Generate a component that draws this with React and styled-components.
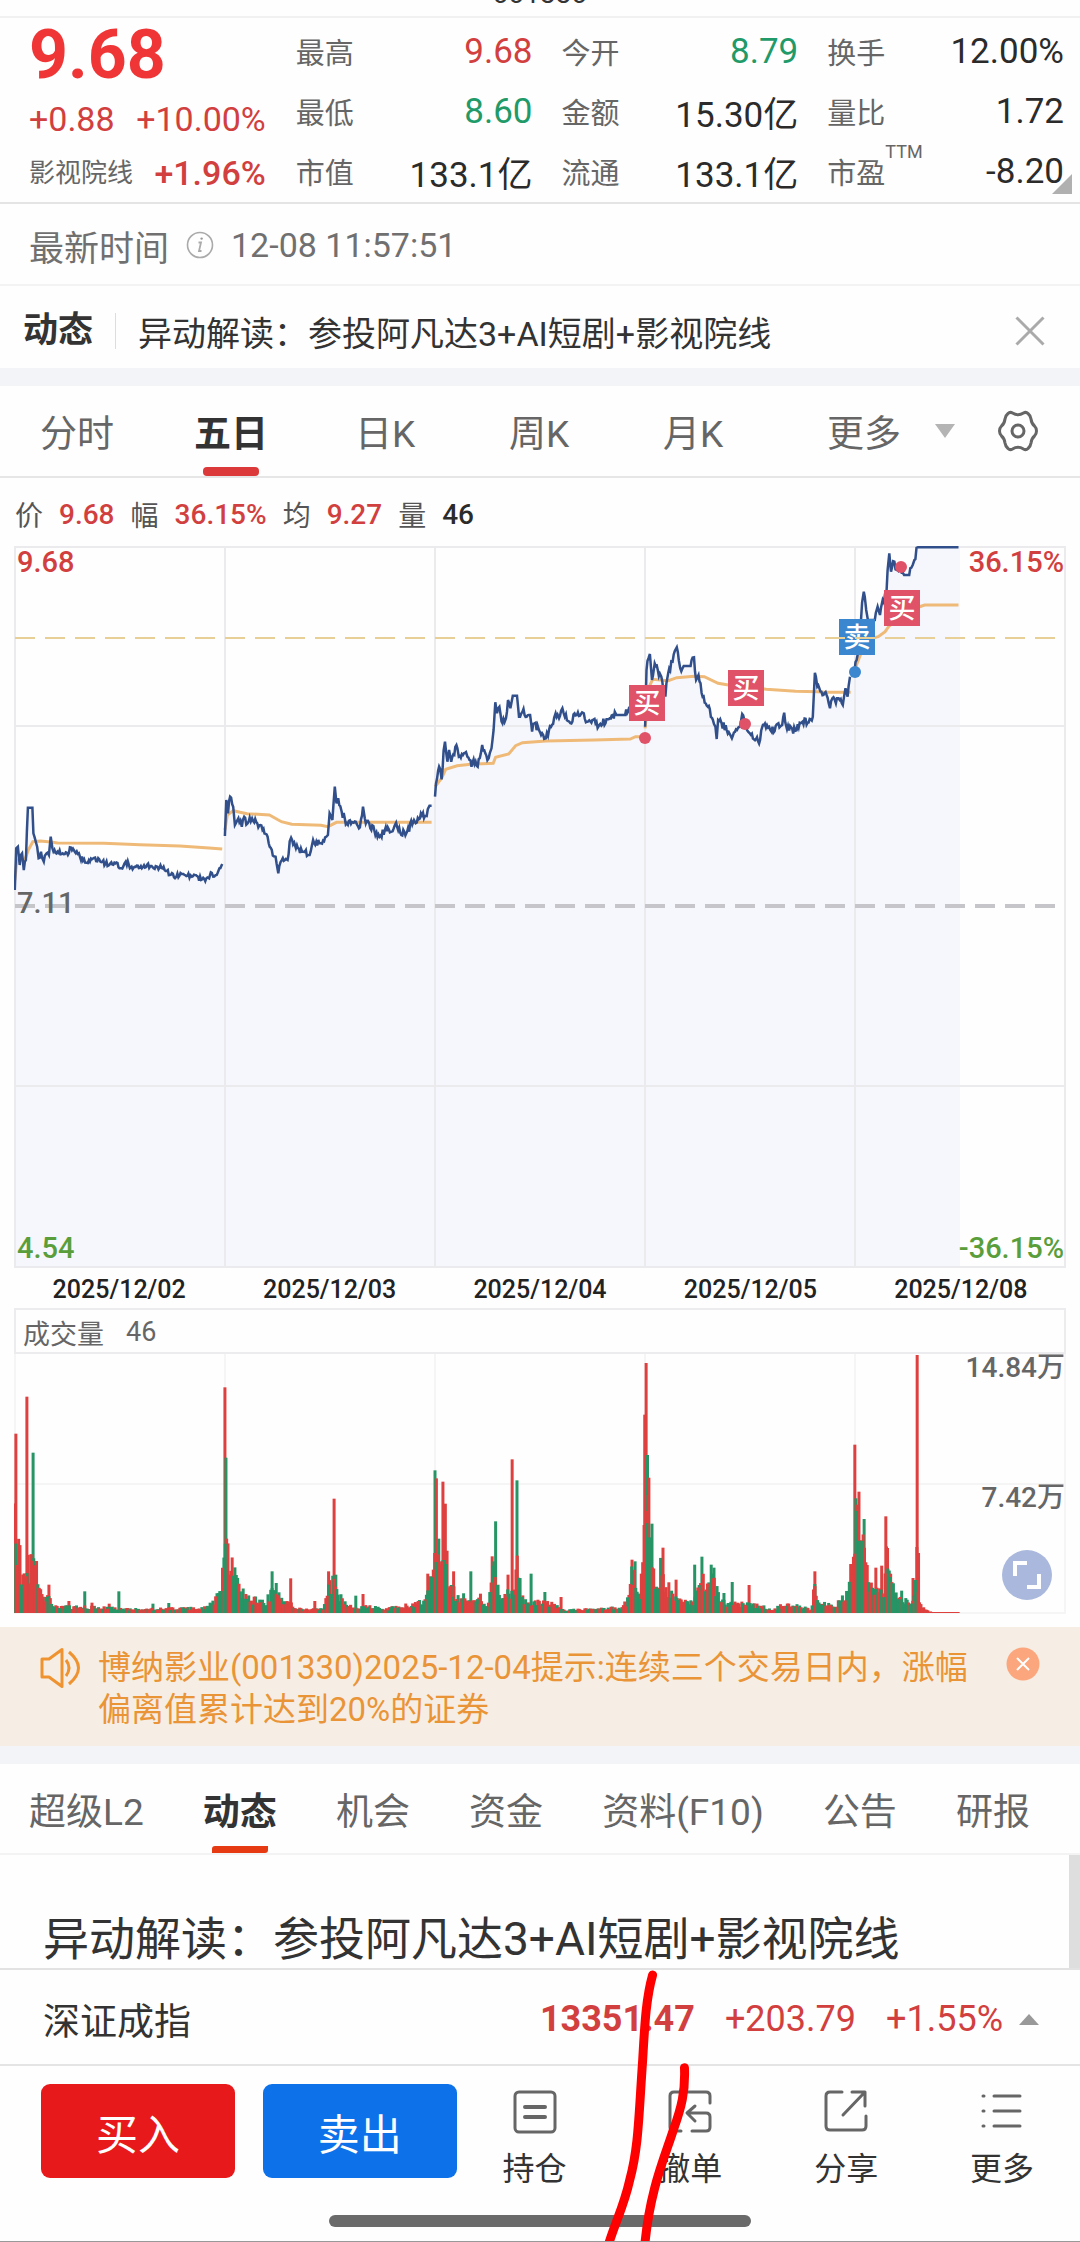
import React, { useState } from "react";
import styled, { createGlobalStyle } from "styled-components";

const GlobalStyle = createGlobalStyle`
  * {
    box-sizing: border-box;
  }
  body {
    margin: 0;
    background: #fefefe;
    color: #333;
    font-family: Roboto, "Noto Sans CJK SC", sans-serif;
  }
  button {
    border: 0;
    padding: 0;
    background: none;
    color: inherit;
    font: inherit;
    cursor: pointer;
  }
  h2, p, dl, dd, dt {
    margin: 0;
    font-weight: 400;
  }
  svg {
    display: block;
  }
`;

const RED = "#d23f3f";
const GREEN = "#1f9a68";
const tones = { up: RED, down: GREEN, plain: "#2b2b2b", muted: "#666" };

/* ---------- data ---------- */

const stats = [
  { label: "最高", value: "9.68", tone: "up" },
  { label: "今开", value: "8.79", tone: "down" },
  { label: "换手", value: "12.00%", tone: "plain" },
  { label: "最低", value: "8.60", tone: "down" },
  { label: "金额", value: "15.30亿", tone: "plain" },
  { label: "量比", value: "1.72", tone: "plain" },
  { label: "市值", value: "133.1亿", tone: "plain" },
  { label: "流通", value: "133.1亿", tone: "plain" },
  { label: "市盈", value: "-8.20", tone: "plain", note: "TTM" }
];

const periods = ["分时", "五日", "日K", "周K", "月K"];
const sections = ["超级L2", "动态", "机会", "资金", "资料(F10)", "公告", "研报"];
const dates = ["2025/12/02", "2025/12/03", "2025/12/04", "2025/12/05", "2025/12/08"];

// Series are kept in ticks: x grows to the right, y grows downwards.
const prices = [
  "46,1050 50,925 55,920 60,975 67,940 72,990 78,960 84,803 97,803 100,880 108,910 115,955 122,935 130,965 138,940 145,945 150,890 155,925 170,935 185,940 200,945 206,922 220,935 235,950 255,968 270,958 300,965 320,975 335,968 355,985 368,965 385,980 440,978 460,980 490,990 496,1005 515,1010 535,1002 560,1010 590,1018 610,1015 615,997 622,1010 632,1005 640,985 648,972",
  "656,888 660,780 665,820 671,770 680,800 685,855 695,835 705,860 712,830 722,850 735,835 750,850 765,870 780,890 792,930 803,950 811,1000 818,965 838,960 848,893 862,925 885,935 902,945 912,900 935,910 955,885 960,820 968,840 975,740 980,790 985,775 995,815 1010,850 1030,848 1048,862 1057,800 1062,835 1075,850 1090,872 1105,890 1120,872 1140,875 1153,848 1165,878 1185,875 1205,840 1210,850 1225,820 1242,828 1250,797 1256,797",
  "1266,770 1272,715 1278,680 1285,718 1295,605 1302,665 1307,630 1313,665 1328,615 1335,650 1350,640 1360,650 1372,680 1378,658 1390,680 1403,615 1412,640 1422,655 1430,625 1436,570 1441,487 1446,520 1453,500 1462,550 1472,535 1478,480 1485,505 1492,467 1504,467 1510,530 1520,515 1542,525 1548,575 1555,550 1568,570 1588,595 1603,560 1616,520 1626,535 1636,505 1643,530 1656,545 1678,525 1698,520 1708,545 1723,540 1743,555 1773,535 1793,525 1818,525 1830,500",
  "1876,560 1880,390 1890,342 1896,420 1904,370 1913,390 1923,410 1935,470 1943,400 1956,365 1968,322 1978,385 1988,378 2008,378 2018,352 2024,420 2031,405 2043,470 2058,500 2073,540 2080,560 2084,597 2088,540 2098,550 2113,570 2128,595 2143,570 2151,560 2158,522 2166,550 2180,580 2198,597 2210,600 2218,555 2243,575 2263,550 2274,555 2280,518 2288,568 2313,572 2333,545 2348,548 2363,530 2369,398 2376,440 2388,455 2403,465 2413,505 2420,475 2430,490 2438,475 2450,495 2458,445 2464,470 2471,410",
  "2484,395 2493,345 2503,240 2511,155 2518,210 2523,240 2543,240 2551,200 2558,225 2566,180 2576,175 2580,90 2585,40 2590,95 2600,65 2608,90 2618,80 2628,105 2643,105 2653,75 2658,60 2668,22 2786,22"
];

const averages = [
  "46,1020 52,960 75,960 85,930 98,905 120,903 150,906 170,909 305,910 410,914 525,918 610,924 648,927",
  "656,870 663,825 680,812 700,817 720,821 785,825 820,845 850,853 935,856 955,860 980,847 1256,847",
  "1266,740 1285,715 1297,688 1330,677 1370,673 1435,670 1442,652 1480,642 1500,617 1520,608 1588,603 1728,600 1833,597 1848,590 1871,590",
  "1876,565 1888,440 1898,418 1943,422 1968,413 2018,409 2048,410 2088,430 2118,435 2228,448 2313,454 2376,455 2398,457 2473,457",
  "2486,385 2503,340 2513,300 2553,290 2573,275 2583,260 2628,215 2673,200 2688,195 2786,195"
];

const marks = [
  { text: "买", color: "#e05268", x: 633, y: 157, dotX: 631, dotY: 192 },
  { text: "买", color: "#e05268", x: 732, y: 142, dotX: 731, dotY: 178 },
  { text: "买", color: "#e05268", x: 888, y: 62, dotX: 887, dotY: 21 },
  { text: "卖", color: "#3b87cf", x: 843, y: 91, dotX: 841, dotY: 126 }
];

// Outline of the traded volume, tick:height
const volumeBase =
  "42:340 48:290 55:270 65:130 100:180 113:140 125:70 150:50 165:28 200:22 320:20 360:14 440:14 600:20 625:40 645:75 653:300 665:260 675:170 690:120 710:75 735:50 770:35 800:80 825:40 860:25 880:12 940:14 955:90 975:110 985:80 1000:40 1030:20 1080:24 1120:12 1150:22 1230:40 1245:90 1262:140 1275:280 1298:240 1305:110 1330:60 1400:42 1420:20 1435:160 1445:85 1465:60 1490:90 1505:160 1520:50 1535:30 1568:45 1588:34 1628:26 1648:10 1718:16 1808:20 1826:45 1836:150 1848:130 1863:70 1873:400 1886:350 1893:260 1903:140 1913:90 1926:190 1936:95 1968:65 1983:38 2013:35 2033:80 2048:130 2078:100 2098:38 2158:35 2218:25 2248:12 2278:30 2328:25 2358:12 2368:90 2383:35 2433:30 2458:60 2473:140 2486:330 2500:300 2513:240 2523:120 2538:70 2568:70 2578:200 2593:90 2618:50 2648:40 2658:60 2665:180 2673:30 2688:12 2708:3 2786:2";

const volumeSpikes =
  "r49:538 r81:649 g99:481 r656:677 g659:466 g249:65 g348:65 g447:28 g493:30 r203:36 r145:85 r270:31 r320:28 g793:125 g805:90 r847:104 r957:125 r973:343 g978:115 g1036:52 r1057:57 r917:36 r1245:118 g1266:428 r1270:404 r1289:394 r1296:328 r1320:125 g1370:125 r1398:58 r1432:170 g1442:275 r1478:115 r1490:461 g1504:398 g1545:118 g1585:63 r1632:48 r1838:160 g1847:155 r1875:595 r1879:750 g1883:474 r1887:406 g1896:268 r1928:196 r1966:100 g2020:145 g2041:169 g2068:145 g2076:136 g2105:60 g2129:93 r2178:84 r2369:125 g2369:87 r2485:505 g2488:344 r2497:364 g2512:282 r2546:136 r2563:142 r2575:290 r2580:195 g2587:108 g2621:67 r2654:105 r2666:774 r2670:180";

/* ---------- helpers ---------- */

const TICK = 0.3444;
const toX = t => t * TICK - 15;
const toY = v => v / 3 - 6;
const parse = text => text.split(" ").map(p => p.split(",").map(Number));

const makeRandom = seed => () => {
  seed = (seed * 16807) % 2147483647;
  return seed / 2147483647;
};

const toLine = points =>
  points.map(([x, y]) => `${toX(x).toFixed(1)},${toY(y).toFixed(1)}`).join(" ");

// adds the small minute-by-minute moves between two known prices
const addMinutes = (points, seed) => {
  const random = makeRandom(seed);
  const out = [];
  points.forEach(([x, y], i) => {
    out.push([x, y]);
    const next = points[i + 1];
    if (!next || next[1] === y) return;
    const steps = Math.floor((next[0] - x) / 3);
    for (let s = 1; s < steps; s++) {
      const t = s / steps;
      const size = x < 150 || x > 656 ? 24 : 16;
      out.push([x + s * 3, y + (next[1] - y) * t + (random() - 0.5) * size]);
    }
  });
  return out;
};

const priceLines = prices.map((p, i) => addMinutes(parse(p), 77 + i * 31));

const areaLine = () => {
  const all = priceLines.reduce((a, b) => a.concat(b), []);
  return `${toX(46)},721 ${toLine(all)} 946,${toY(22)} 946,721`;
};

const makeBars = () => {
  const random = makeRandom(4211);
  const base = volumeBase.split(" ").map(p => p.split(":").map(Number));
  const bars = [];
  let i = 0;
  for (let x = 45; x < 2786; x += 4) {
    while (base[i + 1][0] < x) i++;
    const [x0, h0] = base[i];
    const [x1, h1] = base[i + 1];
    const h = h0 + ((h1 - h0) * (x - x0)) / (x1 - x0);
    const color = x > 2664 || random() < 0.56 ? "r" : "g";
    bars.push({ x, h: h * (0.5 + random() * 0.6), color });
  }
  volumeSpikes.split(" ").forEach(s => {
    const [x, h] = s.slice(1).split(":").map(Number);
    bars.push({ x, h, color: s[0] });
  });
  // the tall ones go behind so that the short ones stay visible
  return bars.sort((a, b) => b.h - a.h);
};

const bars = makeBars();

/* ---------- icons ---------- */

const InfoIcon = () => (
  <svg width="28" height="28" viewBox="0 0 28 28" fill="none" stroke="#aaa">
    <circle cx="14" cy="14" r="12.5" strokeWidth="1.6" />
    <path d="M12.5 11.5h2.5l-2 8.5h2.5" strokeWidth="1.8" />
    <circle cx="15.6" cy="7.6" r="1.2" fill="#999" stroke="none" />
  </svg>
);

const CloseIcon = () => (
  <svg width="30" height="30" viewBox="0 0 30 30" stroke="#aaa" strokeWidth="3">
    <path d="M1.5 1.5l27 27M28.5 1.5l-27 27" />
  </svg>
);

const GearIcon = () => (
  <svg width="40" height="42" viewBox="0 0 40 42" fill="none" stroke="#666" strokeWidth="3">
    <path
      d="M10 3.5Q12 1.5 14.5 3Q20 6.5 25.5 3Q28 1.5 30 3.5Q32.5 5.5 33 9Q33.5 13.5 36.5 16Q38.5 18 38.5 21T36.5 26Q33.5 28.5 33 33Q32.5 36.5 30 38.5Q28 40.5 25.5 39Q20 35.5 14.5 39Q12 40.5 10 38.5Q7.5 36.5 7 33Q6.5 28.5 3.5 26Q1.5 24 1.5 21T3.5 16Q6.5 13.5 7 9Q7.5 5.5 10 3.5Z"
      strokeLinejoin="round"
    />
    <circle cx="20" cy="21" r="6" />
  </svg>
);

const SpeakerIcon = () => (
  <svg width="42" height="42" viewBox="0 0 42 42" fill="none" stroke="#ef9331" strokeWidth="3">
    <path d="M2 12h7L22 2.5v37L9 30H2z" strokeLinejoin="round" />
    <path d="M26 13q6 8 0 16M29 5q19 16 0 32" />
  </svg>
);

const NoticeCloseIcon = () => (
  <svg width="34" height="34" viewBox="0 0 34 34">
    <circle cx="17" cy="17" r="16.5" fill="#fba67d" />
    <path d="M11 11l12 12M23 11l-12 12" stroke="#fff" strokeWidth="2" />
  </svg>
);

const ExpandIcon = () => (
  <svg width="30" height="30" viewBox="0 0 30 30" fill="none" stroke="#fff" strokeWidth="4">
    <path d="M3 16V3h12M27 14v13H15" />
  </svg>
);

const FooterIcon = ({ children }) => (
  <svg
    width="44"
    height="44"
    viewBox="0 0 44 44"
    fill="none"
    stroke="#666"
    strokeWidth="3"
    strokeLinecap="round"
    strokeLinejoin="round"
  >
    {children}
  </svg>
);

const actions = [
  {
    label: "持仓",
    icon: (
      <FooterIcon>
        <rect x="2" y="2" width="40" height="40" rx="4" />
        <path d="M12 17h20M12 27h20" strokeWidth="4" />
      </FooterIcon>
    )
  },
  {
    label: "撤单",
    icon: (
      <FooterIcon>
        <path d="M13 41H6q-4 0-4-4V6q0-4 4-4h32q4 0 4 4v7M24 41h14q4 0 4-4V27q0-4-4-4H20M27 16l-8 7 8 8" />
      </FooterIcon>
    )
  },
  {
    label: "分享",
    icon: (
      <FooterIcon>
        <path d="M18 2H6q-4 0-4 4v30q0 4 4 4h32q4 0 4-4V26M28 2h13v14M40 3L19 25" />
      </FooterIcon>
    )
  },
  {
    label: "更多",
    icon: (
      <FooterIcon>
        <path d="M14 6h26M14 21h26M14 36h26M3 6h1M3 21h1M3 36h1" />
      </FooterIcon>
    )
  }
];

/* ---------- parts ---------- */

const Stats = () => (
  <StatGrid>
    {stats.map(s => (
      <Stat key={s.label}>
        <StatLabel>
          {s.label}
          {s.note && <StatNote>{s.note}</StatNote>}
        </StatLabel>
        <StatValue $tone={s.tone}>{s.value}</StatValue>
      </Stat>
    ))}
  </StatGrid>
);

const PriceChart = () => (
  <ChartBox>
    <svg width="100%" viewBox="0 0 1052 722">
      <polygon points={areaLine()} fill="#f5f7fc" />
      <g stroke="#ebebed" strokeWidth="2" fill="none">
        <path d="M1 1h1050v720H1zM1 180h1050M1 540h1050" />
        <path d="M211 1v720M421 1v720M631 1v720M841 1v720" />
      </g>
      <path d="M1 360h1050" stroke="#c6c6ca" strokeWidth="4" strokeDasharray="20 10" />
      {averages.map(a => (
        <polyline
          key={a}
          points={toLine(parse(a))}
          fill="none"
          stroke="#efba78"
          strokeWidth="3"
        />
      ))}
      {priceLines.map((line, i) => (
        <polyline
          key={dates[i]}
          points={toLine(line)}
          fill="none"
          stroke="#314f8a"
          strokeWidth="2.5"
        />
      ))}
      {marks.map(m => (
        <g key={m.x}>
          <circle cx={m.dotX} cy={m.dotY} r="6" fill={m.color} />
          <rect x={m.x - 18} y={m.y - 18} width="36" height="36" fill={m.color} />
          <text x={m.x} y={m.y + 10} fill="#fff" fontSize="27" fontWeight="500" textAnchor="middle">
            {m.text}
          </text>
        </g>
      ))}
      <path d="M1 92h1050" stroke="#e8cf96" strokeWidth="2" strokeDasharray="20 10" />
    </svg>
    <AxisColumn $color={RED}>
      <span>9.68</span>
      <AxisMuted>7.11</AxisMuted>
      <AxisLow>4.54</AxisLow>
    </AxisColumn>
    <AxisColumn $color={RED} $right>
      <span>36.15%</span>
      <AxisLow>-36.15%</AxisLow>
    </AxisColumn>
  </ChartBox>
);

const VolumeChart = () => (
  <ChartBox>
    <svg width="100%" viewBox="0 0 1052 260">
      <g stroke="#f5f5f6" strokeWidth="2" fill="none">
        <path d="M1 0v259h1050V0M1 130h1050M211 0v259M421 0v259M631 0v259M841 0v259" />
      </g>
      {bars.map((b, i) => (
        <rect
          key={i}
          x={toX(b.x) - 1.5}
          y={259 - Math.max(b.h / 3, 1)}
          width="3"
          height={Math.max(b.h / 3, 1)}
          fill={b.color === "r" ? "#dd403e" : "#279465"}
        />
      ))}
    </svg>
    <VolumeAxis>
      <span>14.84万</span>
      <span>7.42万</span>
    </VolumeAxis>
    <ExpandButton aria-label="全屏">
      <ExpandIcon />
    </ExpandButton>
  </ChartBox>
);

const App = () => {
  const [period, setPeriod] = useState("五日");
  const [section, setSection] = useState("动态");

  return (
    <Page>
      <GlobalStyle />
      <CodeBar>
        <span>001330</span>
      </CodeBar>

      <Quote>
        <QuoteMain>
          <Price>9.68</Price>
          <Change>
            <span>+0.88</span>
            <span>+10.00%</span>
          </Change>
          <Sector>
            <SectorName href="#sector">影视院线</SectorName>
            <span>+1.96%</span>
          </Sector>
        </QuoteMain>
        <Stats />
        <Corner />
      </Quote>

      <TimeRow>
        <TimeLabel>最新时间</TimeLabel>
        <InfoIcon />
        <span>12-08 11:57:51</span>
      </TimeRow>

      <NewsRow>
        <NewsTag>动态</NewsTag>
        <NewsLink href="#news">异动解读：参投阿凡达3+AI短剧+影视院线</NewsLink>
        <button aria-label="关闭">
          <CloseIcon />
        </button>
      </NewsRow>
      <Band />

      <PeriodBar>
        {periods.map(p => (
          <Tab key={p} $active={p === period} onClick={() => setPeriod(p)}>
            {p}
          </Tab>
        ))}
        <MoreTab>
          更多
          <Caret />
        </MoreTab>
        <button aria-label="设置">
          <GearIcon />
        </button>
      </PeriodBar>

      <Legend>
        <span>价</span>
        <LegendValue $tone="up">9.68</LegendValue>
        <span>幅</span>
        <LegendValue $tone="up">36.15%</LegendValue>
        <span>均</span>
        <LegendValue $tone="up">9.27</LegendValue>
        <span>量</span>
        <LegendValue $tone="plain">46</LegendValue>
      </Legend>

      <Charts>
        <PriceChart />
        <Dates>
          {dates.map(d => (
            <span key={d}>{d}</span>
          ))}
        </Dates>
        <VolumeHead>
          <span>成交量</span>
          <span>46</span>
        </VolumeHead>
        <VolumeChart />
      </Charts>

      <Notice>
        <SpeakerIcon />
        <NoticeText>
          博纳影业(001330)2025-12-04提示:连续三个交易日内，涨幅偏离值累计达到20%的证券
        </NoticeText>
        <button aria-label="关闭提示">
          <NoticeCloseIcon />
        </button>
      </Notice>
      <Band />

      <SectionBar>
        {sections.map(s => (
          <Tab key={s} $active={s === section} $slanted onClick={() => setSection(s)}>
            {s}
          </Tab>
        ))}
      </SectionBar>

      <Article>
        <ArticleTitle>异动解读：参投阿凡达3+AI短剧+影视院线</ArticleTitle>
        <ScrollThumb />
      </Article>

      <Bottom>
        <IndexRow>
          <IndexName>深证成指</IndexName>
          <IndexPrice>13351.47</IndexPrice>
          <span>+203.79</span>
          <span>+1.55%</span>
          <Caret $up />
        </IndexRow>
        <Footer>
          <Trades>
            <TradeButton $color="#e8191b">买入</TradeButton>
            <TradeButton $color="#0d72ea">卖出</TradeButton>
          </Trades>
          <Actions>
            {actions.map(a => (
              <Action key={a.label}>
                {a.icon}
                {a.label}
              </Action>
            ))}
          </Actions>
        </Footer>
        <HomeBar />
        <Scribble viewBox="0 0 1080 274" preserveAspectRatio="xMidYMin meet">
          <path d="M653 7C646 32 645 60 643 93C639 150 639 180 630 213C624 240 615 256 608 280" />
          <path d="M685 100C686 124 682 140 674 162C666 188 650 222 645 280" />
        </Scribble>
      </Bottom>
    </Page>
  );
};

export default App;

/* ---------- styles ---------- */

const Page = styled.main`
  min-height: 100vh;
  display: flex;
  flex-direction: column;
  overflow: hidden;
`;

const CodeBar = styled.header`
  display: flex;
  justify-content: center;
  align-items: flex-end;
  height: 18px;
  padding-bottom: 8px;
  border-bottom: 2px solid #f1f1f1;
  overflow: hidden;
  font-size: 28px;
  line-height: 28px;
`;

const Quote = styled.section`
  position: relative;
  display: grid;
  grid-template-columns: 1fr 3fr;
  padding: 3px 16px 0 29px;
  height: 186px;
  border-bottom: 2px solid #e4e4e4;
`;

const QuoteMain = styled.div`
  display: flex;
  flex-direction: column;
  padding-right: 22px;
  color: ${RED};
  font-size: 34px;
  font-weight: 500;
`;

const Price = styled.strong`
  color: #f03536;
  font-size: 68px;
  font-weight: 700;
  line-height: 68px;
`;

const Change = styled.div`
  display: flex;
  justify-content: space-between;
  line-height: 60px;
  font-weight: 400;
`;

const Sector = styled.div`
  display: flex;
  justify-content: space-between;
  line-height: 48px;
`;

const SectorName = styled.a`
  color: #666;
  font-size: 26px;
  font-weight: 400;
  text-decoration: none;
`;

const StatGrid = styled.dl`
  display: grid;
  grid-template-columns: repeat(3, 1fr);
  grid-auto-rows: 60px;
  column-gap: 29px;
  padding-left: 8px;
`;

const Stat = styled.div`
  display: flex;
  justify-content: space-between;
  align-items: center;
`;

const StatLabel = styled.dt`
  position: relative;
  color: #666;
  font-size: 29px;
`;

const StatNote = styled.sup`
  position: absolute;
  left: 100%;
  top: -8px;
  font-size: 18px;
  line-height: 20px;
`;

const StatValue = styled.dd`
  color: ${props => tones[props.$tone]};
  font-size: 35px;
`;

const Corner = styled.i`
  position: absolute;
  right: 8px;
  bottom: 8px;
  border-left: 20px solid transparent;
  border-bottom: 20px solid #b0b0b0;
`;

const TimeRow = styled.div`
  display: flex;
  align-items: center;
  gap: 17px;
  height: 82px;
  padding: 2px 29px 0;
  border-bottom: 2px solid #f3f3f3;
  color: #707070;
  font-size: 34px;
`;

const TimeLabel = styled.span`
  font-size: 35px;
`;

const NewsRow = styled.div`
  display: flex;
  align-items: center;
  height: 82px;
  padding: 8px 35px 0 23px;
  font-size: 34px;
`;

const NewsTag = styled.strong`
  padding-right: 22px;
  border-right: 1px solid #ddd;
  font-size: 35px;
  font-weight: 700;
  line-height: 36px;
`;

const NewsLink = styled.a`
  flex: 1;
  padding-left: 22px;
  color: #333;
  text-decoration: none;
`;

const Band = styled.div`
  height: 18px;
  background: #f3f4f8;
`;

const Tab = styled.button`
  position: relative;
  height: 100%;
  color: ${props => (props.$active ? "#333" : "#666")};
  font-weight: ${props => (props.$active ? 700 : 400)};

  &::after {
    content: "";
    display: ${props => (props.$active ? "block" : "none")};
    position: absolute;
    left: calc(50% - 28px);
    bottom: 0;
    width: 56px;
    height: ${props => (props.$slanted ? "7px" : "9px")};
    border-radius: ${props => (props.$slanted ? "3px 0 3px 0" : "4px")};
    background: ${props => (props.$slanted ? "#e53a12" : "#dc3a3a")};
  }
`;

const PeriodBar = styled.nav`
  display: grid;
  grid-template-columns: repeat(5, 1fr) auto auto;
  align-items: center;
  height: 92px;
  padding-right: 42px;
  border-bottom: 2px solid #e6e6e6;
  font-size: 37px;
`;

const MoreTab = styled.button`
  display: flex;
  align-items: center;
  gap: 34px;
  padding: 0 43px 0 57px;
  color: #666;
`;

const Caret = styled.i`
  border: 10px solid transparent;
  border-top: ${props => (props.$up ? 0 : "14px solid #b4b4b4")};
  border-bottom: ${props => (props.$up ? "11px solid #999" : 0)};
`;

const Legend = styled.div`
  display: flex;
  align-items: center;
  gap: 16px;
  height: 68px;
  padding: 4px 15px 0;
  color: #555;
  font-size: 28px;
`;

const LegendValue = styled.span`
  color: ${props => tones[props.$tone]};
  font-weight: 500;
`;

const Charts = styled.section`
  padding: 0 14px 13px;
`;

const ChartBox = styled.div`
  position: relative;
`;

const AxisColumn = styled.div`
  position: absolute;
  top: 0;
  bottom: 0;
  ${props => (props.$right ? "right: 2px;" : "left: 3px;")}
  display: flex;
  flex-direction: column;
  justify-content: space-between;
  align-items: ${props => (props.$right ? "flex-end" : "flex-start")};
  color: ${props => props.$color};
  font-size: 29px;
  font-weight: 500;
  line-height: 32px;
`;

const AxisMuted = styled.span`
  color: #666;
`;

const AxisLow = styled.span`
  color: #5a9e3c;
  line-height: 40px;
`;

const Dates = styled.div`
  display: grid;
  grid-template-columns: repeat(5, 1fr);
  height: 40px;
  color: #222;
  font-size: 25px;
  font-weight: 500;
  line-height: 44px;
  text-align: center;
`;

const VolumeHead = styled.div`
  display: flex;
  align-items: center;
  gap: 22px;
  height: 46px;
  padding: 2px 7px 0;
  border: 2px solid #ececee;
  color: #666;
  font-size: 27px;
`;

const VolumeAxis = styled.div`
  position: absolute;
  top: 0;
  right: 1px;
  bottom: 0;
  display: grid;
  grid-template-rows: 1fr 1fr;
  color: #666;
  font-size: 28px;
  font-weight: 500;
  line-height: 28px;
  text-align: right;
`;

const ExpandButton = styled.button`
  position: absolute;
  right: 14px;
  bottom: 14px;
  display: grid;
  place-items: center;
  width: 50px;
  height: 50px;
  border-radius: 50%;
  background: #a9b8dc;
`;

const Notice = styled.aside`
  display: flex;
  align-items: flex-start;
  gap: 16px;
  padding: 20px 40px 15px;
  background: #f6eee4;
  color: #ea9438;
`;

const NoticeText = styled.p`
  flex: 1;
  font-size: 33px;
  line-height: 42px;
`;

const SectionBar = styled.nav`
  display: flex;
  align-items: center;
  justify-content: space-between;
  height: 91px;
  padding: 0 50px 0 29px;
  border-bottom: 2px solid #f3f3f3;
  font-size: 37px;
`;

const Article = styled.article`
  position: relative;
  flex: 1;
  padding: 56px 43px 0;
`;

const ArticleTitle = styled.h2`
  font-size: 46px;
  line-height: 56px;
`;

const ScrollThumb = styled.i`
  position: absolute;
  top: 0;
  right: 0;
  bottom: 0;
  width: 11px;
  background: #dedede;
`;

const Bottom = styled.div`
  position: relative;
  border-bottom: 1px solid #999;
`;

const IndexRow = styled.div`
  display: flex;
  align-items: center;
  gap: 30px;
  height: 98px;
  padding: 4px 41px 0 43px;
  border-top: 2px solid #e2e2e2;
  border-bottom: 2px solid #e4e4e4;
  color: ${RED};
  font-size: 36px;

  ${Caret} {
    margin-left: -14px;
  }
`;

const IndexName = styled.span`
  flex: 1;
  color: #333;
  font-size: 37px;
`;

const IndexPrice = styled.strong`
  font-weight: 700;
`;

const Footer = styled.footer`
  display: flex;
  align-items: flex-start;
  padding: 18px 0 29px 41px;
`;

const Trades = styled.div`
  flex: 0 0 40%;
  display: grid;
  grid-template-columns: 1fr 1fr;
  gap: 28px;
`;

const TradeButton = styled.button`
  height: 94px;
  border-radius: 9px;
  background: ${props => props.$color};
  color: #fff;
  font-size: 42px;
`;

const Actions = styled.div`
  flex: 1;
  display: grid;
  grid-template-columns: repeat(4, 1fr);
`;

const Action = styled.button`
  display: flex;
  flex-direction: column;
  align-items: center;
  gap: 18px;
  padding-top: 6px;
  font-size: 32px;
  line-height: 34px;
`;

const HomeBar = styled.div`
  width: 39%;
  height: 12px;
  margin: 0 auto 14px;
  border-radius: 6px;
  background: #6a6a6a;
`;

const Scribble = styled.svg`
  position: absolute;
  top: 0;
  left: 0;
  width: 100%;
  height: 100%;
  fill: none;
  stroke: #fe0000;
  stroke-width: 9px;
  stroke-linecap: round;
  pointer-events: none;
`;
